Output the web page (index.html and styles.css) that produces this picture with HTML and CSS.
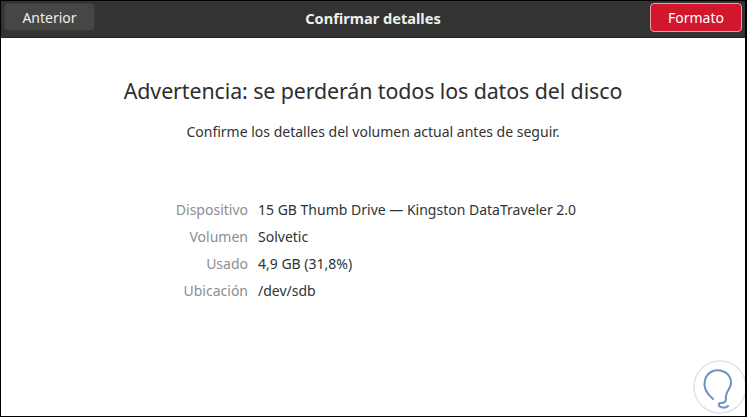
FILE: index.html
```html
<!DOCTYPE html>
<html>
<head>
<meta charset="utf-8">
<link rel="stylesheet" href="styles.css">
</head>
<body>
<div class="window">
  <header class="headerbar">
    <button class="btn btn-back">Anterior</button>
    <div class="title">Confirmar detalles</div>
    <button class="btn btn-danger">Formato</button>
  </header>
  <main class="content">
    <h1 class="heading">Advertencia: se perderán todos los datos del disco</h1>
    <p class="sub">Confirme los detalles del volumen actual antes de seguir.</p>
    <div class="details">
      <div class="label">Dispositivo</div><div class="value">15 GB Thumb Drive — Kingston DataTraveler 2.0</div>
      <div class="label">Volumen</div><div class="value">Solvetic</div>
      <div class="label">Usado</div><div class="value">4,9 GB (31,8%)</div>
      <div class="label">Ubicación</div><div class="value">/dev/sdb</div>
    </div>
    <svg class="watermark" width="56" height="56" viewBox="0 0 56 56">
      <circle cx="28" cy="28" r="26" fill="#fff" stroke="#e2e4e8" stroke-width="1.5"/>
      <path d="M21 40 C15 35 11 28 13 21 C15 13 23 10 30 12 C37 14 41 21 38 28 C36 32 33 35 34 40 C34 43 32 44 29 44 C26 44 26 47 29 48 C32 49 35 48 36 47" fill="none" stroke="#6d93c4" stroke-width="2" stroke-linecap="round"/>
    </svg>
  </main>
</div>
</body>
</html>
```
FILE: styles.css
```css
html, body {
  margin: 0;
  padding: 0;
  background: #fff;
}
body {
  font-family: "Noto Sans", "Open Sans", sans-serif;
}
.window {
  width: 747px;
  height: 417px;
  box-sizing: border-box;
  border: 1px solid #000;
  border-right-width: 2px;
  display: flex;
  flex-direction: column;
  overflow: hidden;
}
.headerbar {
  height: 36px;
  flex: none;
  background: #333333;
  border-bottom: 1px solid #242424;
  display: flex;
  align-items: center;
  justify-content: space-between;
  padding: 0 3px 0 3px;
  position: relative;
}
.btn {
  font-family: inherit;
  font-size: 14px;
  height: 28px;
  border-radius: 4px;
  color: #eeeeec;
  cursor: default;
  padding: 0;
}
.btn-back {
  width: 91px;
  background: #474645;
  border: 1px solid #3c3b3a;
  margin-top: -4px;
}
.btn-danger {
  width: 92px;
  height: 29px;
  background: #d1162e;
  border: 1px solid #f29aa8;
  color: #fff;
  margin-top: -4px;
}
.title {
  position: absolute;
  left: 0;
  right: 0;
  top: 7px;
  text-align: center;
  font-weight: bold;
  font-size: 14.6px;
  color: #f0f0ee;
  pointer-events: none;
}
.content {
  flex: 1;
  display: flex;
  flex-direction: column;
  align-items: center;
  position: relative;
  color: #2e3436;
}
.heading {
  margin: 38px 0 0 0;
  font-weight: normal;
  font-size: 21.4px;
  line-height: 30px;
  color: #2e2e2e;
  letter-spacing: -0.1px;
}
.sub {
  margin: 16px 0 0 0;
  font-size: 14px;
  line-height: 20px;
  color: #333;
}
.details {
  margin: 58px 0 0 162px;
  display: grid;
  grid-template-columns: 85px auto;
  column-gap: 10px;
  row-gap: 8px;
  font-size: 14px;
  line-height: 19px;
  align-self: flex-start;
}
.label {
  text-align: right;
  color: #8b8e8f;
}
.value {
  color: #2e3436;
}
.watermark {
  position: absolute;
  left: 691px;
  top: 321px;
}
```
